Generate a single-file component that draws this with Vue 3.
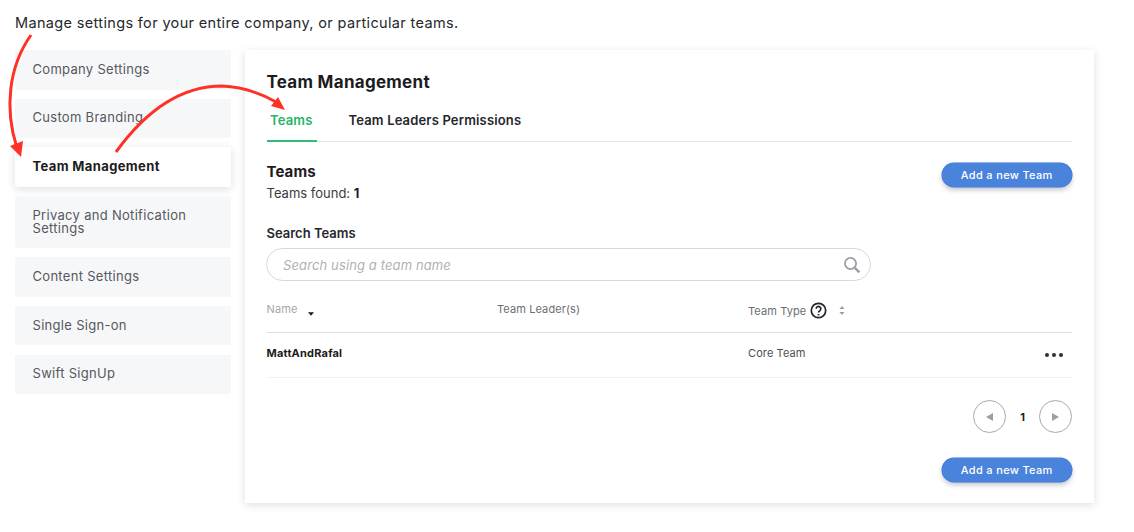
<script setup>
const menu = [
  { label: 'Company Settings' },
  { label: 'Custom Branding' },
  { label: 'Team Management', active: true },
  { label: 'Privacy and Notification Settings' },
  { label: 'Content Settings' },
  { label: 'Single Sign-on' },
  { label: 'Swift SignUp' },
]
</script>

<template>
  <div class="page">
    <p class="intro">Manage settings for your entire company, or particular teams.</p>
    <div class="layout">
      <nav class="menu">
        <a v-for="m in menu" :key="m.label" class="item" :class="{ active: m.active }">{{ m.label }}</a>
      </nav>
      <main class="card">
        <h1 class="title">Team Management</h1>
        <div class="tabs">
          <span class="tab on">Teams</span>
          <span class="tab">Team Leaders Permissions</span>
        </div>
        <div class="head">
          <div>
            <h2 class="sub">Teams</h2>
            <div class="found">Teams found: <b>1</b></div>
          </div>
          <button class="btn">Add a new Team</button>
        </div>
        <label class="slabel">Search Teams</label>
        <div class="search">
          <span class="ph">Search using a team name</span>
          <svg width="18" height="18" viewBox="0 0 18 18" fill="none" stroke="#9a9fa6" stroke-width="1.8">
            <circle cx="7.5" cy="7.5" r="5.6" />
            <path d="M11.8 11.8 16.4 16.4" stroke-width="2.4" />
          </svg>
        </div>
        <div class="row thead">
          <div class="c1 name">Name <svg width="6" height="4" viewBox="0 0 7 4" class="caret"><path d="M0 0h7L3.5 4z" fill="#1b1b1f" /></svg></div>
          <div class="c2">Team Leader(s)</div>
          <div class="c3 type">Team Type
            <svg width="17" height="17" viewBox="0 0 17 17" fill="none" stroke="#22252b">
              <circle cx="8.5" cy="8.5" r="7.2" stroke-width="1.7" />
              <path d="M6.2 6.8a2.3 2.3 0 1 1 3.6 1.9c-.8.5-1.3.9-1.3 1.9" stroke-width="1.7" />
              <path d="M8.5 12v1.4" stroke-width="1.7" />
            </svg>
            <svg class="sort" width="6" height="9" viewBox="0 0 6 9"><path d="M3 0l2.6 3H.4zM3 9 .4 6h5.2z" fill="#9a9fa6" /></svg>
          </div>
        </div>
        <div class="row tbody">
          <div class="c1 strong">MattAndRafal</div>
          <div class="c2"></div>
          <div class="c3">Core Team</div>
          <div class="dots"><i></i><i></i><i></i></div>
        </div>
        <div class="pager">
          <span class="round"><svg width="7" height="8" viewBox="0 0 7 8"><path d="M7 0v8L0 4z" fill="#9a9fa6" /></svg></span>
          <b class="num">1</b>
          <span class="round"><svg width="7" height="8" viewBox="0 0 7 8"><path d="M0 0v8l7-4z" fill="#9a9fa6" /></svg></span>
        </div>
        <div class="foot"><button class="btn">Add a new Team</button></div>
      </main>
    </div>
    <svg class="arrows" width="1134" height="532" viewBox="0 0 1134 532" fill="none">
      <path d="M31 35C9 66 4 108 17 148" stroke="#ff3126" stroke-width="3" />
      <path d="M10 146 23 141 21 157z" fill="#ff3126" />
      <path d="M116 152C150 105 185 86 222 86 244 87 262 94 276 102" stroke="#ff3126" stroke-width="3" />
      <path d="M278 97 285 110 271 106z" fill="#ff3126" />
    </svg>
  </div>
</template>

<style>
html, body { margin: 0; background: #fff; }
</style>

<style scoped>
.page { position: relative; width: 1134px; height: 532px; overflow: hidden; box-sizing: border-box; padding: 14px 0 0 15px; font-family: Inter, "Open Sans", sans-serif; color: #1c1c20; }
.intro { margin: 0; font-size: 14.5px; line-height: 17px; letter-spacing: .345px; color: #26272b; }
.layout { display: flex; gap: 14px; margin-top: 19px; }
.menu { width: 216px; display: flex; flex-direction: column; gap: 9.2px; }
.item { box-sizing: border-box; min-height: 39.5px; padding: 12.6px 17px 13.4px 17.5px; background: #f6f7f9; border-radius: 2px; font-size: 13px; line-height: 13px; letter-spacing: .3px; color: #56585d; display: block; }
.item.active { background: #fff; color: #1c1c20; font-weight: 700; box-shadow: 0 2px 8px rgba(40, 50, 70, .16); letter-spacing: .37px; }
.card { box-sizing: border-box; width: 849px; height: 453px; padding: 22px 22px 0 21.5px; background: #fff; box-shadow: 0 2px 8px rgba(50, 60, 90, .16); }
.title { margin: 0; font-size: 17px; line-height: 21px; font-weight: 700; letter-spacing: .28px; color: #1c1c20; }
.tabs { display: flex; gap: 32px; margin-top: 18px; height: 30px; border-bottom: 1px solid #e3e4e6; }
.tab { font-size: 13px; line-height: 18px; font-weight: 600; letter-spacing: .16px; height: 30px; box-sizing: border-box; color: #26272b; }
.tab.on { color: #25b566; border-bottom: 2px solid #35bb72; height: 31px; width: 50px; padding-left: 3.5px; }
.head { display: flex; justify-content: space-between; margin-top: 21px; }
.sub { margin: 0; font-size: 15px; line-height: 18px; font-weight: 700; letter-spacing: .1px; }
.found { margin-top: 5px; font-size: 13px; line-height: 15px; letter-spacing: 0; color: #3a3b40; }
.found b { color: #1c1c20; }
.btn { box-sizing: border-box; width: 130.5px; height: 24px; padding: 0; border: 0; border-radius: 12px; background: #4a83db; box-shadow: 0 0 0 .5px #3a70d8, 0 3px 5px rgba(40, 50, 80, .28); color: #fff; font-family: inherit; font-size: 11px; font-weight: 500; letter-spacing: .33px; }
.slabel { display: block; margin-top: 24px; font-size: 13px; line-height: 16px; font-weight: 600; color: #26272b; }
.search { box-sizing: border-box; width: 605px; height: 33px; margin-top: 7px; margin-left: -.5px; padding: 0 9px 0 16px; border: 1px solid #d6d8db; border-radius: 17px; display: flex; align-items: center; justify-content: space-between; }
.ph { font-size: 13px; font-style: italic; color: #aeb1b6; letter-spacing: .12px; }
.row { display: flex; align-items: center; position: relative; font-size: 11px; color: #6c6e73; letter-spacing: .1px; }
.c1 { width: 230.5px; flex: none; }
.c2 { width: 251px; flex: none; }
.c3 { flex: none; }
.thead { height: 51px; border-bottom: 1px solid #dfe0e4; }
.name { color: #a4a7ab; margin-top: 4px; }
.caret { margin: 0 0 -3px 7px; }
.thead .c2 { margin-top: 4px; }
.type { display: flex; align-items: center; gap: 4px; color: #6c6e73; margin-top: 8px; }
.sort { margin-left: 8px; }
.tbody { height: 44px; border-bottom: 1px solid #eff0f2; }
.tbody .c1, .tbody .c3 { margin-top: -4px; }
.strong { font-weight: 700; color: #1c1c20; letter-spacing: .2px; }
.tbody .c3 { color: #4c4e53; }
.dots { position: absolute; right: 9px; top: 20px; display: flex; gap: 3px; }
.dots i { width: 4px; height: 4px; border-radius: 50%; background: #2d3038; }
.pager { display: flex; align-items: center; justify-content: flex-end; margin-top: 22px; height: 33px; }
.round { box-sizing: border-box; width: 33px; height: 33px; border: 1px solid #a7a9ad; border-radius: 50%; display: flex; align-items: center; justify-content: center; }
.num { width: 33px; text-align: center; font-size: 11px; }
.foot { display: flex; justify-content: flex-end; margin-top: 25px; }
.arrows { position: absolute; left: 0; top: 0; pointer-events: none; }
</style>
